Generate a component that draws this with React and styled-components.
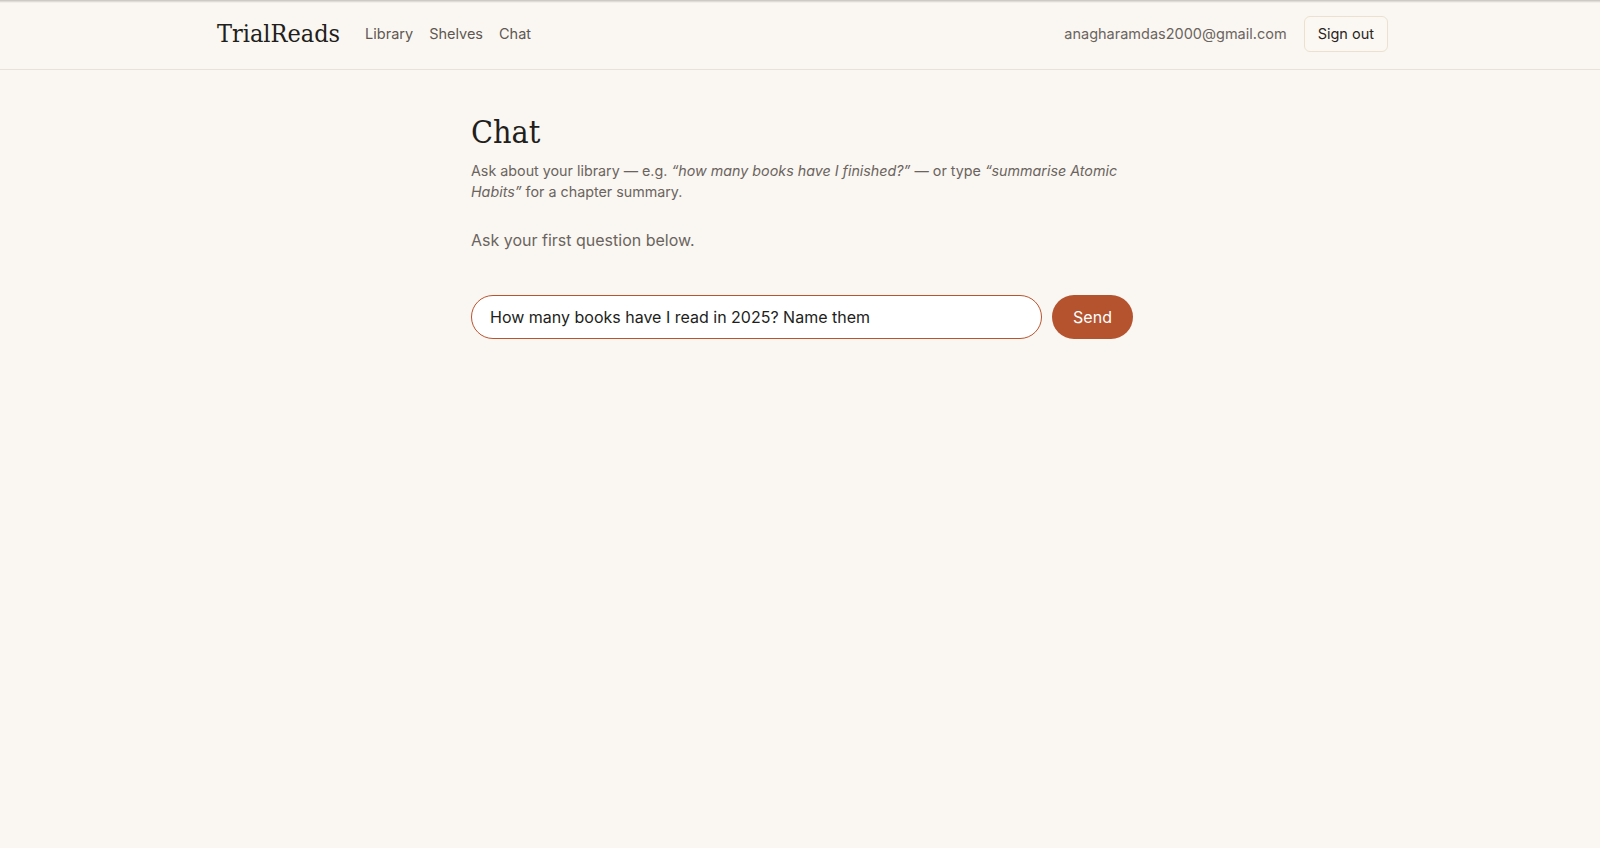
import React, { useState } from 'react';
import styled, { createGlobalStyle } from 'styled-components';

const GlobalStyle = createGlobalStyle`
  html, body {
    margin: 0;
    padding: 0;
  }
  body {
    font-family: Inter, "Noto Sans", "Liberation Sans", sans-serif;
    color: #2a2522;
    min-height: 848px;
    background: linear-gradient(to bottom, rgba(0, 0, 0, 0.22), rgba(0, 0, 0, 0) 3px) no-repeat, #faf7f2;
  }
  * {
    box-sizing: border-box;
  }
`

const serif = `"DejaVu Serif Condensed", "DejaVu Serif", Georgia, serif`

const Header = styled.header`
  height: 70px;
  border-bottom: 1px solid #e9e2d8;
`

const HeaderInner = styled.div`
  max-width: 1176px;
  height: 100%;
  margin: 0 auto;
  padding: 0 0 2px 5px;
  display: flex;
  align-items: center;
  justify-content: space-between;
`

const Left = styled.div`
  display: flex;
  align-items: center;
  gap: 25px;
`

const Logo = styled.a`
  font-family: ${serif};
  font-stretch: condensed;
  font-size: 25px;
  color: #221e1b;
  text-decoration: none;
`

const Nav = styled.nav`
  display: flex;
  gap: 16px;
`

const NavLink = styled.a`
  font-size: 14.5px;
  color: #5f5852;
  text-decoration: none;
  cursor: pointer;
`

const Right = styled.div`
  display: flex;
  align-items: center;
  gap: 17px;
`

const Email = styled.span`
  font-size: 14.5px;
  color: #6b645e;
`

const GhostButton = styled.button`
  height: 36px;
  padding: 0 13px;
  border: 1px solid #ebe1d0;
  border-radius: 6px;
  background: #fbf8f3;
  font-family: inherit;
  font-size: 14.5px;
  color: #2a2522;
  cursor: pointer;
`

const Main = styled.main`
  max-width: 666px;
  margin: 0 auto;
  padding: 42px 0 0 4px;
`

const Title = styled.h1`
  margin: 0;
  font-family: ${serif};
  font-stretch: condensed;
  font-weight: 400;
  font-size: 32px;
  line-height: 40px;
  color: #221e1b;
`

const Lead = styled.p`
  margin: 8px 0 0;
  font-size: 14.3px;
  line-height: 21px;
  color: #6b645e;

  em {
    font-style: italic;
  }
`

const Empty = styled.p`
  margin: 27px 0 0;
  font-size: 16px;
  line-height: 22px;
  color: #6b645e;
`

const Composer = styled.form`
  margin-top: 44px;
  display: flex;
  gap: 10px;
`

const Input = styled.input`
  flex: 1;
  height: 44px;
  padding: 0 18px;
  border: 1px solid #b9542f;
  border-radius: 22px;
  background: #fff;
  font-family: inherit;
  font-size: 16px;
  color: #221e1b;
  outline: none;
`

const SendButton = styled.button`
  width: 81px;
  height: 44px;
  border: none;
  border-radius: 22px;
  background: #b5532f;
  color: #fff;
  font-family: inherit;
  font-size: 16px;
  cursor: pointer;
`

const App = () => {
  const [question, setQuestion] = useState('How many books have I read in 2025? Name them')

  return (
    <>
      <GlobalStyle />
      <Header>
        <HeaderInner>
          <Left>
            <Logo>TrialReads</Logo>
            <Nav>
              <NavLink>Library</NavLink>
              <NavLink>Shelves</NavLink>
              <NavLink>Chat</NavLink>
            </Nav>
          </Left>
          <Right>
            <Email>anagharamdas2000@gmail.com</Email>
            <GhostButton>Sign out</GhostButton>
          </Right>
        </HeaderInner>
      </Header>
      <Main>
        <Title>Chat</Title>
        <Lead>
          Ask about your library — e.g. <em>“how many books have I finished?”</em> — or type{' '}
          <em>“summarise Atomic Habits”</em> for a chapter summary.
        </Lead>
        <Empty>Ask your first question below.</Empty>
        <Composer onSubmit={e => e.preventDefault()}>
          <Input value={question} onChange={e => setQuestion(e.target.value)} />
          <SendButton type="submit">Send</SendButton>
        </Composer>
      </Main>
    </>
  )
}

export default App;
